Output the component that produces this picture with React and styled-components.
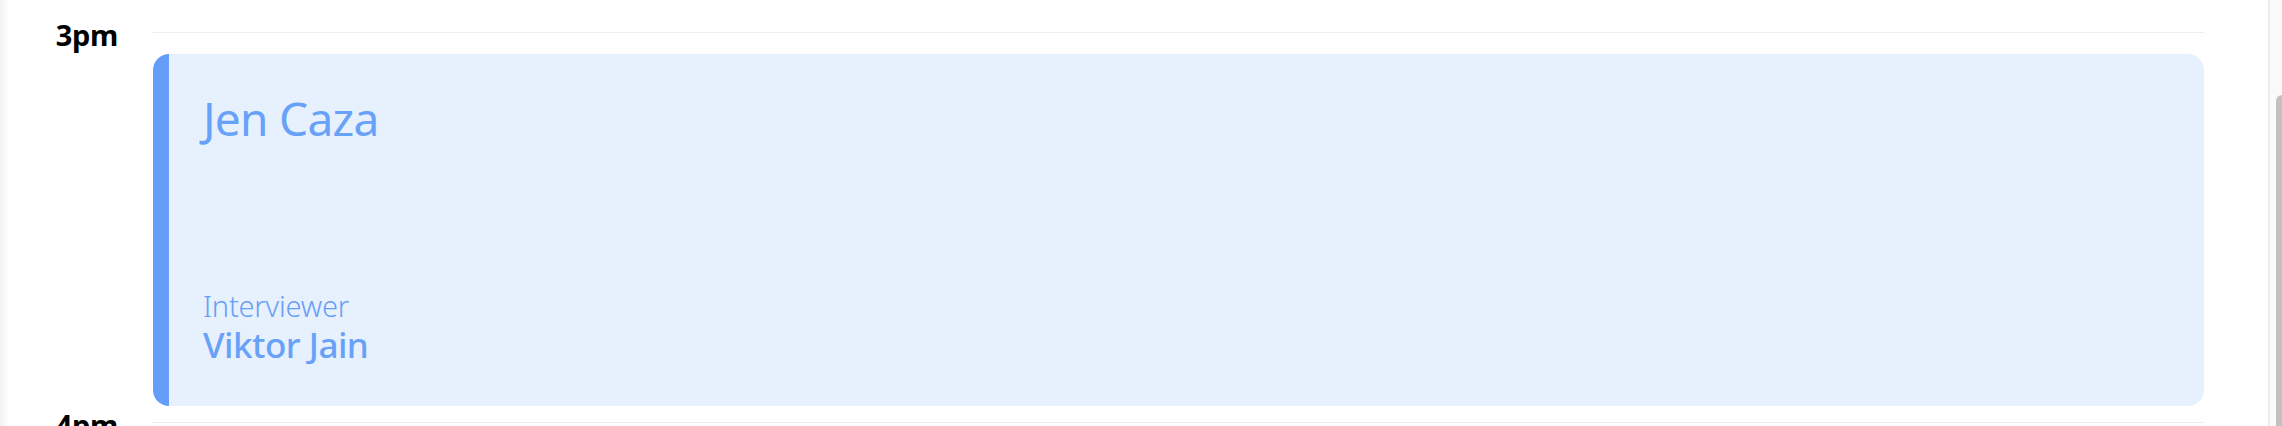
import React from 'react';
import styled, { createGlobalStyle } from 'styled-components';

const GlobalStyle = createGlobalStyle`
  html, body {
    margin: 0;
    padding: 0;
    background: #ffffff;
    overflow: hidden;
  }
  body {
    font-family: "Noto Sans", "Open Sans", sans-serif;
  }
`;

const hours = [
    {
        label: '3pm',
        events: [
            { title: 'Jen Caza', role: 'Interviewer', person: 'Viktor Jain' },
        ],
    },
    { label: '4pm', events: [] },
];

const App = () => {
    return (
        <Page>
            <GlobalStyle/>
            <Schedule>
                {hours.map(hour => (
                    <HourRow key={hour.label}>
                        <HourLabel>{hour.label}</HourLabel>
                        <Slot>
                            {hour.events.map(ev => (
                                <EventCard key={ev.title}>
                                    <EventTitle>{ev.title}</EventTitle>
                                    <EventMeta>
                                        <MetaLabel>{ev.role}</MetaLabel>
                                        <MetaValue>{ev.person}</MetaValue>
                                    </EventMeta>
                                </EventCard>
                            ))}
                        </Slot>
                    </HourRow>
                ))}
            </Schedule>
            <ScrollTrack>
                <ScrollThumb/>
            </ScrollTrack>
        </Page>
    );
};

export default App;

const Page = styled.div`
  display: flex;
  flex-direction: row;
  width: 2282px;
  height: 426px;
  overflow: hidden;
`;

const Schedule = styled.div`
  flex: 1;
  display: flex;
  flex-direction: column;
  padding: 32px 64px 0 0;
  box-shadow: inset 9px 0 8px -6px rgba(0,0,0,0.07);
`;

const HourRow = styled.div`
  display: grid;
  grid-template-columns: 152px 1fr;
  height: 390px;
  flex-shrink: 0;
`;

const HourLabel = styled.div`
  font-size: 29px;
  line-height: 29px;
  font-weight: 700;
  letter-spacing: -0.3px;
  color: #000;
  text-align: right;
  padding-right: 34px;
  margin-top: -12px;
`;

const Slot = styled.div`
  border-top: 1.5px solid #ececec;
  padding: 21px 0 0 1px;
`;

const EventCard = styled.div`
  box-sizing: border-box;
  height: 352px;
  display: flex;
  flex-direction: column;
  justify-content: space-between;
  background-color: #e7f0fd;
  border-left: 16px solid #659ef8;
  border-radius: 16px;
  padding: 37px 34px 40px 34px;
  color: #67a1f8;
`;

const EventTitle = styled.div`
  font-size: 46px;
  line-height: 1.2;
  font-weight: 400;
  letter-spacing: -0.7px;
`;

const EventMeta = styled.div`
  display: flex;
  flex-direction: column;
`;

const MetaLabel = styled.div`
  font-size: 29px;
  line-height: 1.2;
  font-weight: 300;
  letter-spacing: -0.2px;
  color: #679ff6;
`;

const MetaValue = styled.div`
  font-size: 35px;
  line-height: 1.2;
  font-weight: 500;
  letter-spacing: -0.5px;
`;

const ScrollTrack = styled.div`
  width: 12px;
  flex-shrink: 0;
  border-left: 2px solid #ececec;
  background-color: #fafafa;
  padding-top: 95px;
  display: flex;
  justify-content: flex-end;
`;

const ScrollThumb = styled.div`
  width: 6px;
  height: 400px;
  background-color: #c1c1c1;
  border-radius: 6px 0 0 0;
`;
